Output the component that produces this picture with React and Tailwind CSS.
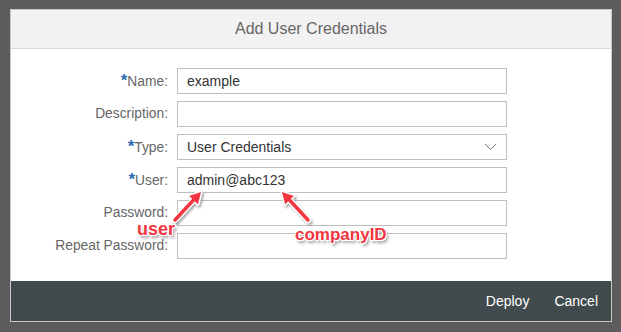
import React from "react";

const rows = [
  { label: "Name:", required: true, value: "example" },
  { label: "Description:", value: "" },
  { label: "Type:", required: true, value: "User Credentials", select: true },
  { label: "User:", required: true, value: "admin@abc123" },
  { label: "Password:", value: "" },
  { label: "Repeat Password:", value: "" },
];

// red annotation arrow with a white outline
const Arrow = ({ x1, y1, x2, y2 }) => {
  const a = Math.atan2(y2 - y1, x2 - x1);
  const len = 11;
  const half = 6;
  const bx = x2 - len * Math.cos(a);
  const by = y2 - len * Math.sin(a);
  const nx = -Math.sin(a) * half;
  const ny = Math.cos(a) * half;
  const head = `${x2},${y2} ${bx + nx},${by + ny} ${bx - nx},${by - ny}`;
  return (
    <g filter="url(#shadow)">
      <line x1={x1} y1={y1} x2={bx} y2={by} stroke="#ffffff" strokeWidth="6" strokeLinecap="round" />
      <polygon points={head} fill="#ffffff" stroke="#ffffff" strokeWidth="3" strokeLinejoin="round" />
      <line x1={x1} y1={y1} x2={bx} y2={by} stroke="#f2353f" strokeWidth="3.5" strokeLinecap="round" />
      <polygon points={head} fill="#f2353f" />
    </g>
  );
};

const note =
  "absolute font-bold leading-none text-[#f2353f] [text-shadow:1px_1px_0_#fff,-1px_-1px_0_#fff,1px_-1px_0_#fff,-1px_1px_0_#fff,0_1px_0_#fff,1px_0_0_#fff,2px_3px_3px_rgba(0,0,0,0.45)]";

export default function App() {
  return (
    <div className="relative h-[332px] w-[621px] bg-[#5c5c5c] pt-[9px] pl-[10px] font-['Liberation_Sans',Arial,sans-serif]">
      <div className="flex h-[313px] w-[602px] flex-col border border-[#c8c8c8] bg-white">
        <div className="flex h-[39px] items-center justify-center border-b border-[#d9d9d9] bg-[#f2f2f2] text-[16px] text-[#666666]">
          Add User Credentials
        </div>
        <div className="flex flex-1 flex-col gap-[7px] pt-[19px]">
          {rows.map((r) => (
            <div key={r.label} className="flex h-[26px] items-center">
              <div className="w-[158px] whitespace-nowrap pr-[1px] text-right text-[13.8px] text-[#666666]">
                {r.required && <span className="text-[17px] font-bold text-[#2b6cb5]">*</span>}
                {r.label}
              </div>
              <div className="ml-[8px] flex h-[26px] w-[330px] items-center justify-between border border-[#bfbfbf] bg-white px-[9px] text-[14px] text-[#333333]">
                <span>{r.value}</span>
                {r.select && (
                  <svg width="13" height="8" viewBox="0 0 13 8">
                    <polyline points="1,1 6.5,6.5 12,1" fill="none" stroke="#777777" strokeWidth="1" />
                  </svg>
                )}
              </div>
            </div>
          ))}
        </div>
        <div className="flex h-[40px] items-center justify-end gap-[25px] bg-[#414a4c] pr-[13px] text-[14px] text-white">
          <span>Deploy</span>
          <span>Cancel</span>
        </div>
      </div>

      <svg className="absolute left-0 top-0" width="621" height="332">
        <defs>
          <filter id="shadow" x="-50%" y="-50%" width="200%" height="200%">
            <feDropShadow dx="1.5" dy="2" stdDeviation="1.2" floodColor="#000" floodOpacity="0.35" />
          </filter>
        </defs>
        <Arrow x1={175} y1={220} x2={201} y2={192} />
        <Arrow x1={308} y1={220} x2={282} y2={192} />
      </svg>
      <div className={`${note} left-[137px] top-[220px] text-[18px]`}>user</div>
      <div className={`${note} left-[295px] top-[226px] text-[17px]`}>companyID</div>
    </div>
  );
}
